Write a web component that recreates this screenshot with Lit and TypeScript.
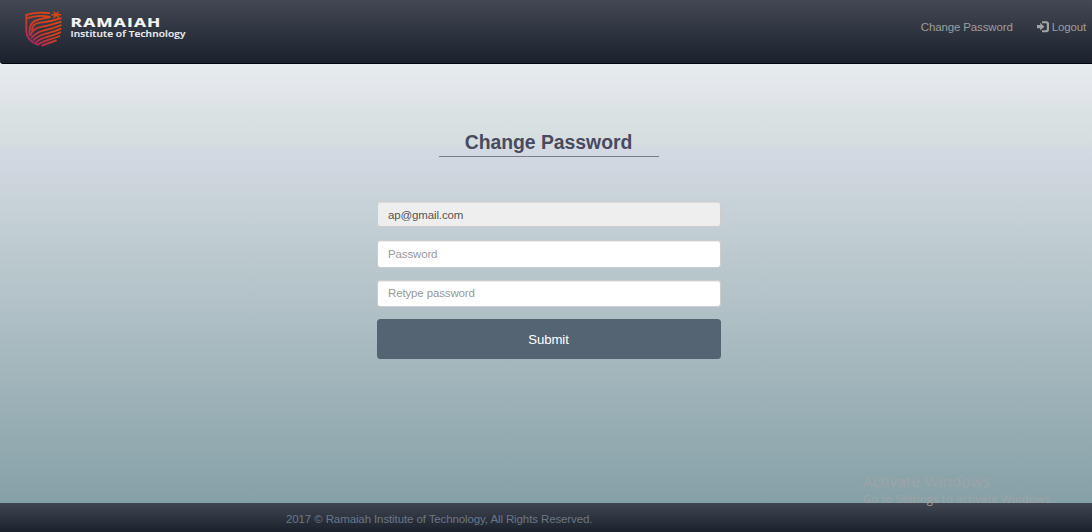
import { LitElement, html, css, svg } from "lit";
import { customElement } from "lit/decorators.js";

@customElement("brand-logo")
class BrandLogo extends LitElement {
  static styles = css`
    :host { display: block; }
    .logo { display: block; }
    .mark { fill: none; stroke: url(#ember); stroke-width: 1.85; stroke-linecap: butt; }
    .star { stroke: #e0440f; stroke-width: 1.5; }
    .name { font: 700 13.2px "Open Sans", sans-serif; letter-spacing: 0.9px; fill: #f5f6f8; stroke: #f5f6f8; stroke-width: 0.2; }
    .sub { font: 600 8.8px "Open Sans", sans-serif; letter-spacing: 0.1px; fill: #eceef1; stroke: #eceef1; stroke-width: 0.15; }
  `;

  render() {
    return html`<svg class="logo" width="170" height="44" viewBox="20 6 170 44" role="img">
      ${svg`<defs>
        <linearGradient id="ember" gradientUnits="userSpaceOnUse" x1="52" y1="20" x2="34" y2="46">
          <stop offset="0" stop-color="#e0440f"></stop>
          <stop offset="0.5" stop-color="#cf3a27"></stop>
          <stop offset="1" stop-color="#a82465"></stop>
        </linearGradient>
      </defs>
      <g class="mark">
        <path d="M25.6 15.4 C32 12.7 41 12.2 50 13.2"></path>
        <path d="M26.3 14.8 V31 C26.5 38 31.5 42.6 38.5 45"></path>
        <path d="M26.4 18.4 C34 15.6 43 15.2 50.4 17.2 C45 18 40 19 37 20.2 C30 22 28.8 28 29.8 36"></path>
        <path d="M32.2 31.5 C31.6 26 34 23.4 39 22.8 C47 22.2 53 21.2 61.4 18.2"></path>
        <path d="M30.4 35.8 C32 30.4 35 27.8 41 26.8 C49 25.6 54 24 61.4 21.6"></path>
        <path d="M31 38.4 C35 33.4 40 31.4 45 30.2 C51 28.8 56 27.4 61.4 25"></path>
        <path d="M33 40.6 C37 36.4 42 34.6 47 33.4 C53 32 57 30.6 61.2 28.6"></path>
        <path d="M35.4 42.6 C39 39.4 43 37.8 48 36.6 C53 35.4 57 34 61 32.2"></path>
        <path d="M38 44.4 C42 41.8 45 40.6 49 39.6 C53 38.6 56.4 37.4 60 36"></path>
        <path d="M41.5 45.8 C46 43.6 51 42.4 56.6 40.4"></path>
      </g>
      <path class="star" d="M51.4 14.7 H61 M53.8 11.6 L58.6 17.8 M58.6 11.6 L53.8 17.8"></path>
      <text class="name" x="70.5" y="26.8" textLength="91" lengthAdjust="spacingAndGlyphs">RAMAIAH</text>
      <text class="sub" x="70.5" y="36.6" textLength="115" lengthAdjust="spacingAndGlyphs">Institute of Technology</text>`}
    </svg>`;
  }
}

@customElement("app-root")
class AppRoot extends LitElement {
  static styles = css`
    :host {
      display: flex;
      flex-direction: column;
      position: relative;
      height: 532px;
      overflow: hidden;
      font: 11.5px/16px "Liberation Sans", Arial, sans-serif;
      letter-spacing: -0.14px;
      background: linear-gradient(180deg, #e8edf0 60px, #e0e4e8 100px, #dae2e3 112px, #d5dddf 144px, #d3dae3 147px, #ced5de 178px, #c9d4d9 194px, #86a0a7 503px);
    }
    * { box-sizing: border-box; }
    .bar {
      display: flex;
      justify-content: space-between;
      flex: none;
      height: 64px;
      padding: 6px 6px 0 20px;
      border: 1px solid #05070e;
      border-width: 0 0 1px;
      border-radius: 0 0 0 3px;
      background: linear-gradient(#434854, #1b212c);
    }
    .links { display: flex; gap: 24px; padding-top: 13px; color: #9d9d9d; }
    .logout { display: flex; gap: 3px; }
    .icon { width: 12px; height: 12px; margin-top: 2px; fill: #a3a3a3; }
    .content { flex: 1; display: flex; flex-direction: column; align-items: center; padding: 66px 0 0 5px; }
    .title {
      width: 220px;
      height: 27px;
      margin: 0 0 44px;
      border-bottom: 1px solid #7d7d83;
      font-size: 19.4px;
      line-height: 25px;
      letter-spacing: -0.03px;
      text-align: center;
      color: #484b60;
    }
    .form { display: flex; flex-direction: column; gap: 12px; width: 344px; }
    .field {
      width: 100%;
      height: 27.5px;
      padding: 0 10.5px;
      border: 1px solid #ccc;
      border-radius: 3.2px;
      font: inherit;
      letter-spacing: inherit;
      color: #555;
      background: #fff;
      box-shadow: inset 0 1px 1px rgba(0, 0, 0, 0.075);
    }
    .field::placeholder { color: #999; opacity: 1; }
    .field.locked { background: #eee; height: 26px; padding-top: 1px; margin-bottom: 1px; }
    .submit {
      height: 40px;
      padding: 0;
      border: 0;
      border-radius: 3.5px;
      font: 13.2px "Liberation Sans", Arial, sans-serif;
      letter-spacing: -0.1px;
      color: #fff;
      background: #556473;
    }
    .footer {
      flex: none;
      height: 29px;
      padding: 8px 0 0 286px;
      letter-spacing: -0.11px;
      color: #6b7788;
      background: linear-gradient(#404652, #1b212c);
    }
    .notice {
      position: absolute;
      left: 863px;
      top: 471px;
      white-space: nowrap;
      letter-spacing: 0.15px;
      font-family: "Open Sans", sans-serif;
      font-weight: 400;
      color: #9fa4a6;
    }
    .notice-title { font-size: 15.2px; line-height: 20px; }
    .notice-text { font-size: 11.3px; line-height: 16px; }
  `;

  render() {
    return html`
      <header class="bar">
        <brand-logo></brand-logo>
        <nav class="links">
          <span>Change Password</span>
          <span class="logout">
            <svg class="icon" viewBox="0 0 12 12">
              <path d="M0 4.1 H3.2 V1.8 L7.4 5.7 L3.2 9.6 V7.3 H0 Z"></path>
              <path d="M5 0.2 H9.4 Q12 0.2 12 2.8 V8.6 Q12 11.2 9.4 11.2 H5 V9.2 H8.8 Q9.8 9.2 9.8 8.2 V3.2 Q9.8 2.2 8.8 2.2 H5 Z"></path>
            </svg>
            <span>Logout</span>
          </span>
        </nav>
      </header>
      <main class="content">
        <h1 class="title">Change Password</h1>
        <form class="form">
          <input class="field locked" value="ap@gmail.com" readonly />
          <input class="field" type="text" placeholder="Password" />
          <input class="field" type="text" placeholder="Retype password" />
          <button class="submit" type="button">Submit</button>
        </form>
      </main>
      <footer class="footer">2017 © Ramaiah Institute of Technology, All Rights Reserved.</footer>
      <aside class="notice">
        <div class="notice-title">Activate Windows</div>
        <div class="notice-text">Go to Settings to activate Windows.</div>
      </aside>
    `;
  }
}
